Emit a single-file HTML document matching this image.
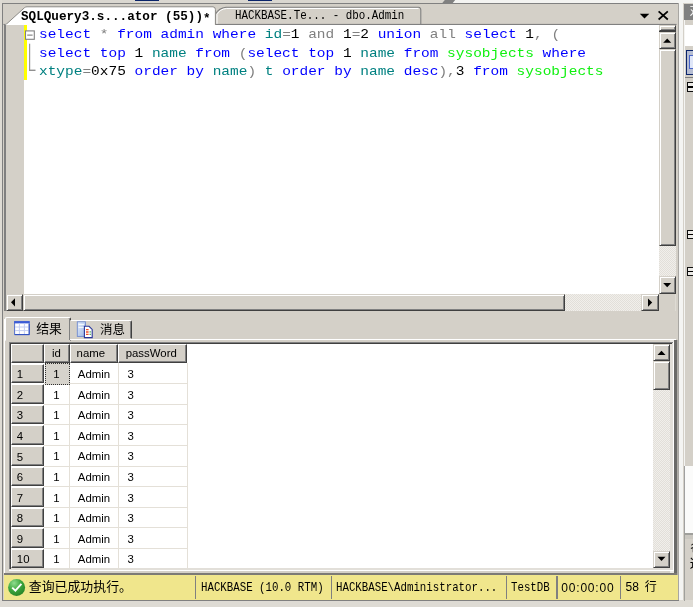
<!DOCTYPE html>
<html><head><meta charset="utf-8">
<style>
html,body{margin:0;padding:0;}
body{width:693px;height:607px;overflow:hidden;background:#d4d0c8;position:relative;font-family:"Liberation Sans","Noto Sans CJK SC",sans-serif;}
.a{position:absolute;}
.btn{position:absolute;background:#d4d0c8;box-sizing:border-box;border:1px solid;border-color:#d4d0c8 #404040 #404040 #d4d0c8;box-shadow:inset 1px 1px 0 #fff, inset -1px -1px 0 #808080;}
.track{position:absolute;background:#e9e7e2 repeating-conic-gradient(#f1efeb 0% 25%,#e2dfd9 0% 50%) 0 0/2px 2px;}
.code{position:absolute;left:39.3px;font-family:"Liberation Mono",monospace;font-size:12.6px;transform-origin:0 0;transform:scaleX(1.1487);white-space:pre;line-height:18.43px;height:18.43px;color:#000;}
.k{color:#0000ff}.g{color:#808080}.t{color:#008080}.s{color:#10f010}
.sim{font-family:"Liberation Mono","Noto Sans CJK SC",monospace;font-size:13px;white-space:pre;color:#000;transform-origin:0 0;transform:scaleX(0.827);}
.tah{font-family:"Liberation Sans","Noto Sans CJK SC",sans-serif;font-size:11.4px;white-space:pre;color:#000;}
.rh{position:absolute;left:10.5px;width:33px;height:19.6px;background:#d4d0c8;box-sizing:border-box;border:1px solid;border-color:#fff #404040 #404040 #fff;box-shadow:inset -1px -1px 0 #808080;}
.rh span,.cell{position:absolute;font-family:"Liberation Sans",sans-serif;font-size:11.4px;line-height:20px;color:#000;white-space:pre;}
.hl{position:absolute;background:#e4e0d8;}
#root{position:absolute;left:0;top:0;width:693px;height:607px;overflow:hidden;background:#d4d0c8;filter:blur(0.3px);}
</style></head><body><div id="root">

<!-- top strip -->
<div class="a" style="left:0;top:0;width:693px;height:3.3px;background:#dad7d0"></div>
<div class="a" style="left:0;top:0;width:2.2px;height:607px;background:#dedbd4"></div>
<div class="a" style="left:452.5px;top:0;width:241px;height:3.3px;background:#f4f4f2"></div>
<svg class="a" style="left:440px;top:0" width="20" height="4"><polygon points="1.9,3.4 4.8,0 15.2,0 12.3,3.4" fill="#808080"/></svg>
<div class="a" style="left:134.5px;top:0;width:24.5px;height:1.4px;background:#0a246a"></div>
<div class="a" style="left:247.5px;top:0;width:24.5px;height:1.4px;background:#0a246a"></div>

<!-- main panel frame -->
<div class="a" style="left:2.3px;top:3.2px;width:676.5px;height:1.2px;background:#808080"></div>
<div class="a" style="left:2.3px;top:3.2px;width:1.2px;height:597px;background:#808080"></div>
<div class="a" style="left:677.6px;top:3.2px;width:1.3px;height:598px;background:#a8a6a2"></div>
<!-- gap right of main panel -->
<div class="a" style="left:678.8px;top:3.2px;width:4.5px;height:597px;background:#f4f4f2"></div>

<!-- tab strip -->
<svg class="a" style="left:0;top:0" width="693" height="30">
  <!-- inactive tab -->
  <path d="M215.5,24.5 L215.5,14 Q219,8 226,7.3 L418.5,7.3 Q420.8,7.5 420.8,10 L420.8,24.5" fill="#d4d0c8" stroke="#808080" stroke-width="1.1"/>
  <path d="M217,24 L217,14.5 Q220,9 226.5,8.5 L418.5,8.5" fill="none" stroke="#fff" stroke-width="1"/>
  <!-- bottom line of strip -->
  <rect x="3.5" y="23.9" width="673" height="1.1" fill="#808080"/>
  <!-- active tab -->
  <path d="M4.6,25.5 L6.2,24.3 L24.6,7.6 Q25.6,6.8 27,6.8 L213,6.8 Q215.4,7 215.4,9.5 L215.4,25.5 Z" fill="#fff" stroke="#8c8a86" stroke-width="1"/>
  <rect x="5.6" y="24.6" width="209.3" height="1.5" fill="#fff"/>
  <!-- dropdown + close -->
  <polygon points="639.8,13.8 649.3,13.8 644.5,18.6" fill="#000"/>
  <path d="M658.6,11.3 L667.8,19.5 M667.8,11.3 L658.6,19.5" stroke="#000" stroke-width="1.7" fill="none"/>
</svg>
<div class="a sim" style="left:21.3px;top:9.6px;font-weight:bold;font-size:13px;transform:scaleX(0.972);line-height:14px">SQLQuery3.s...ator (55))<span style="position:relative;top:2.6px">*</span></div>
<div class="a sim" style="left:235px;top:9.4px;line-height:14px;transform:scaleX(0.835)">HACKBASE.Te... - dbo.Admin</div>

<!-- editor -->
<div class="a" style="left:4.4px;top:25px;width:1.2px;height:286px;background:#808080"></div>
<div class="a" style="left:5.5px;top:25px;width:653.1px;height:268.9px;background:#fff"></div>
<div class="a" style="left:5.5px;top:25px;width:18.5px;height:268.9px;background:#d4d0c8"></div>
<div class="a" style="left:24px;top:25px;width:3.2px;height:54.9px;background:#ffff00"></div>
<!-- outline -->
<svg class="a" style="left:24px;top:25px" width="16" height="60">
  <rect x="1.5" y="5.9" width="8.8" height="8.4" fill="#fff" stroke="#808080" stroke-width="1.1"/>
  <rect x="3.2" y="9.6" width="5.4" height="1" fill="#707070"/>
  <rect x="5.1" y="18.7" width="1.1" height="27.3" fill="#909090"/>
  <rect x="5.1" y="44.6" width="6.4" height="1.4" fill="#909090"/>
</svg>
<div class="code" style="top:26.3px"><span class="k">select</span> <span class="g">*</span> <span class="k">from admin where</span> <span class="t">id</span><span class="g">=</span>1 <span class="g">and</span> 1<span class="g">=</span>2 <span class="k">union</span> <span class="g">all</span> <span class="k">select</span> 1<span class="g">,</span> <span class="g">(</span></div>
<div class="code" style="top:44.73px"><span class="k">select top</span> 1 <span class="t">name</span> <span class="k">from</span> <span class="g">(</span><span class="k">select top</span> 1 <span class="t">name</span> <span class="k">from</span> <span class="s">sysobjects</span> <span class="k">where</span></div>
<div class="code" style="top:63.16px"><span class="t">xtype</span><span class="g">=</span>0x75 <span class="k">order by</span> <span class="t">name</span><span class="g">)</span> <span class="t">t</span> <span class="k">order by</span> <span class="t">name</span> <span class="k">desc</span><span class="g">),</span>3 <span class="k">from</span> <span class="s">sysobjects</span></div>

<!-- editor v scrollbar -->
<div class="track" style="left:658.6px;top:25px;width:17.3px;height:269px"></div>
<div class="btn" style="left:658.6px;top:25px;width:17.3px;height:6px"></div>
<div class="a" style="left:658.6px;top:31px;width:17.3px;height:1.3px;background:#404040"></div>
<div class="btn" style="left:658.6px;top:32.2px;width:17.3px;height:16.4px"></div>
<div class="btn" style="left:658.6px;top:48.6px;width:17.3px;height:197.4px"></div>
<div class="btn" style="left:658.6px;top:276.3px;width:17.3px;height:17.4px"></div>
<!-- editor h scrollbar -->
<div class="track" style="left:5.5px;top:293.9px;width:653.1px;height:17.3px"></div>
<div class="btn" style="left:5.5px;top:293.9px;width:17.3px;height:17.3px"></div>
<div class="btn" style="left:22.8px;top:293.9px;width:541.8px;height:17.3px"></div>
<div class="btn" style="left:641.3px;top:293.9px;width:17.3px;height:17.3px"></div>
<div class="a" style="left:658.6px;top:293.9px;width:17.9px;height:17.3px;background:#d4d0c8;box-shadow:inset -1px 0 0 #dedbd4"></div>

<!-- results tabs -->
<div class="a" style="left:5px;top:317px;width:65.8px;height:23.5px;box-sizing:border-box;border:1px solid;border-color:#fff #404040 #d4d0c8 #fff;border-radius:2px 2px 0 0;box-shadow:inset -1px 0 0 #808080"></div>
<div class="a" style="left:70px;top:319.5px;width:62px;height:19.5px;box-sizing:border-box;border:1px solid;border-color:#fff #404040 #d4d0c8 #d4d0c8;border-radius:0 2px 0 0;box-shadow:inset -1px 0 0 #808080"></div>
<!-- icons -->
<svg class="a" style="left:13.5px;top:321px" width="17" height="15">
  <rect x="0.6" y="0.6" width="14.6" height="13" fill="#fff" stroke="#5570cc" stroke-width="1"/>
  <rect x="0.2" y="0.2" width="15.4" height="2.2" fill="#3c5cd6"/>
  <path d="M1,6 H15 M1,9.6 H15 M5.4,2.4 V13.4 M10.4,2.4 V13.4" stroke="#c4cef2" stroke-width="1"/>
  <path d="M15.2,3 V13.6 H1" stroke="#3050c0" stroke-width="1" fill="none"/>
</svg>
<svg class="a" style="left:76px;top:320px" width="18" height="19">
  <defs><linearGradient id="pg" x1="0" y1="0" x2="1" y2="1"><stop offset="0" stop-color="#e4eefc"/><stop offset="1" stop-color="#9db6e4"/></linearGradient></defs>
  <rect x="1.3" y="1.8" width="8.2" height="14.6" fill="url(#pg)" stroke="#6f8ad0" stroke-width="0.9"/>
  <path d="M2.5,4.5 H8 M2.5,7.5 H8" stroke="#fff" stroke-width="1" opacity="0.8"/>
  <path d="M8.4,6.3 L13,6.3 L16.2,9.4 L16.2,17.6 L8.4,17.6 Z" fill="#fff" stroke="#28369a" stroke-width="1.1"/>
  <path d="M10,9.6 H12.6 M10,12 H12.6 M10,14.4 H12.6" stroke="#f0502a" stroke-width="1.4"/>
  <path d="M13.6,11.8 H14.8 M13.6,14.4 H14.8" stroke="#30a040" stroke-width="1.3"/>
</svg>
<div class="a" style="left:36.3px;top:320.5px;font-size:12.8px;line-height:16px;font-family:'Liberation Sans','Noto Sans CJK SC',sans-serif">结果</div>
<div class="a" style="left:100px;top:322.3px;font-size:12.5px;line-height:16px;font-family:'Liberation Sans','Noto Sans CJK SC',sans-serif">消息</div>

<!-- results pane -->
<!-- tab page raised border -->
<div class="a" style="left:70px;top:339.3px;width:606px;height:1.1px;background:#fff"></div>
<div class="a" style="left:4px;top:318.5px;width:1.1px;height:255px;background:#fff"></div>
<div class="a" style="left:670.2px;top:340px;width:4.4px;height:233px;background:#eceae6"></div>
<div class="a" style="left:674.4px;top:340px;width:2.3px;height:235px;background:#6a6a68"></div>
<div class="a" style="left:676.7px;top:340px;width:1px;height:235px;background:#b0aea8"></div>
<div class="a" style="left:4px;top:572.7px;width:673px;height:2.6px;background:#7c7a76"></div>
<!-- grid sunken border -->
<div class="a" style="left:8.6px;top:341.9px;width:665.8px;height:229.6px;background:#fff"></div>
<div class="a" style="left:8.6px;top:341.9px;width:664.6px;height:228.4px;background:#e2dfd9"></div>
<div class="a" style="left:10.7px;top:344px;width:659.5px;height:224px;background:#fff"></div>
<div class="a" style="left:8.6px;top:341.9px;width:664px;height:1.1px;background:#808080"></div>
<div class="a" style="left:8.6px;top:341.9px;width:1.1px;height:227px;background:#808080"></div>
<div class="a" style="left:9.7px;top:343px;width:662px;height:1.1px;background:#404040"></div>
<div class="a" style="left:9.7px;top:343px;width:1.1px;height:225.5px;background:#404040"></div>
<!-- results v scrollbar -->
<div class="track" style="left:653.2px;top:344px;width:17px;height:224px"></div>
<div class="btn" style="left:653.2px;top:344px;width:17px;height:16.5px"></div>
<div class="btn" style="left:653.2px;top:360.5px;width:17px;height:29.5px"></div>
<div class="btn" style="left:653.2px;top:551px;width:17px;height:17px"></div>
<!-- grid header -->
<div class="rh" style="top:344.00px;left:10.70px;width:33.70px;height:19.20px"></div>
<div class="rh" style="top:344.00px;left:44.40px;width:25.20px;height:19.20px"><span style="left:6.7px;top:-2px">id</span></div>
<div class="rh" style="top:344.00px;left:69.60px;width:48.50px;height:19.20px"><span style="left:6.0px;top:-2px">name</span></div>
<div class="rh" style="top:344.00px;left:118.10px;width:69.20px;height:19.20px"><span style="left:6.6px;top:-2px">passWord</span></div>
<div class="rh" style="top:363.70px"><span style="left:5.3px;top:-0.4px">1</span></div>
<div class="cell" style="left:53.3px;top:364.20px">1</div>
<div class="cell" style="left:77.8px;top:364.20px">Admin</div>
<div class="cell" style="left:127.5px;top:364.20px">3</div>
<div class="hl" style="left:44.4px;top:383.26px;width:143.2px;height:1.1px"></div>
<div class="rh" style="top:384.26px"><span style="left:5.3px;top:-0.4px">2</span></div>
<div class="cell" style="left:53.3px;top:384.76px">1</div>
<div class="cell" style="left:77.8px;top:384.76px">Admin</div>
<div class="cell" style="left:127.5px;top:384.76px">3</div>
<div class="hl" style="left:44.4px;top:403.82px;width:143.2px;height:1.1px"></div>
<div class="rh" style="top:404.82px"><span style="left:5.3px;top:-0.4px">3</span></div>
<div class="cell" style="left:53.3px;top:405.32px">1</div>
<div class="cell" style="left:77.8px;top:405.32px">Admin</div>
<div class="cell" style="left:127.5px;top:405.32px">3</div>
<div class="hl" style="left:44.4px;top:424.38px;width:143.2px;height:1.1px"></div>
<div class="rh" style="top:425.38px"><span style="left:5.3px;top:-0.4px">4</span></div>
<div class="cell" style="left:53.3px;top:425.88px">1</div>
<div class="cell" style="left:77.8px;top:425.88px">Admin</div>
<div class="cell" style="left:127.5px;top:425.88px">3</div>
<div class="hl" style="left:44.4px;top:444.94px;width:143.2px;height:1.1px"></div>
<div class="rh" style="top:445.94px"><span style="left:5.3px;top:-0.4px">5</span></div>
<div class="cell" style="left:53.3px;top:446.44px">1</div>
<div class="cell" style="left:77.8px;top:446.44px">Admin</div>
<div class="cell" style="left:127.5px;top:446.44px">3</div>
<div class="hl" style="left:44.4px;top:465.50px;width:143.2px;height:1.1px"></div>
<div class="rh" style="top:466.50px"><span style="left:5.3px;top:-0.4px">6</span></div>
<div class="cell" style="left:53.3px;top:467.00px">1</div>
<div class="cell" style="left:77.8px;top:467.00px">Admin</div>
<div class="cell" style="left:127.5px;top:467.00px">3</div>
<div class="hl" style="left:44.4px;top:486.06px;width:143.2px;height:1.1px"></div>
<div class="rh" style="top:487.06px"><span style="left:5.3px;top:-0.4px">7</span></div>
<div class="cell" style="left:53.3px;top:487.56px">1</div>
<div class="cell" style="left:77.8px;top:487.56px">Admin</div>
<div class="cell" style="left:127.5px;top:487.56px">3</div>
<div class="hl" style="left:44.4px;top:506.62px;width:143.2px;height:1.1px"></div>
<div class="rh" style="top:507.62px"><span style="left:5.3px;top:-0.4px">8</span></div>
<div class="cell" style="left:53.3px;top:508.12px">1</div>
<div class="cell" style="left:77.8px;top:508.12px">Admin</div>
<div class="cell" style="left:127.5px;top:508.12px">3</div>
<div class="hl" style="left:44.4px;top:527.18px;width:143.2px;height:1.1px"></div>
<div class="rh" style="top:528.18px"><span style="left:5.3px;top:-0.4px">9</span></div>
<div class="cell" style="left:53.3px;top:528.68px">1</div>
<div class="cell" style="left:77.8px;top:528.68px">Admin</div>
<div class="cell" style="left:127.5px;top:528.68px">3</div>
<div class="hl" style="left:44.4px;top:547.74px;width:143.2px;height:1.1px"></div>
<div class="rh" style="top:548.74px"><span style="left:5.3px;top:-0.4px">10</span></div>
<div class="cell" style="left:53.3px;top:549.24px">1</div>
<div class="cell" style="left:77.8px;top:549.24px">Admin</div>
<div class="cell" style="left:127.5px;top:549.24px">3</div>
<div class="hl" style="left:69.0px;top:363.3px;width:1.1px;height:204.7px"></div>
<div class="hl" style="left:117.5px;top:363.3px;width:1.1px;height:204.7px"></div>
<div class="hl" style="left:186.6px;top:363.3px;width:1.1px;height:204.7px"></div>
<div class="a" style="left:45.3px;top:362.6px;width:25.2px;height:22px;background:#d6d3cc;box-sizing:border-box;border:1.1px dotted #303030"></div>
<div class="cell" style="left:53.3px;top:364.20px">1</div>
<!-- status bar -->
<div class="a" style="left:4px;top:575.2px;width:674px;height:24.8px;background:#f0e68c"></div>
<svg class="a" style="left:6.9px;top:577px" width="20" height="21">
  <defs><radialGradient id="gg" cx="0.35" cy="0.25" r="0.9"><stop offset="0" stop-color="#8fdc8f"/><stop offset="0.45" stop-color="#3fa83f"/><stop offset="1" stop-color="#207a20"/></radialGradient></defs>
  <circle cx="9.6" cy="10.4" r="8.5" fill="url(#gg)"/>
  <path d="M5.2,10.6 L8.4,13.6 L14.4,6.8" fill="none" stroke="#fff" stroke-width="1.9"/>
</svg>
<div class="a" style="left:28.8px;top:578px;font-size:12.9px;line-height:17px;font-family:'Liberation Sans','Noto Sans CJK SC',sans-serif;white-space:pre">查询已成功执行。</div>
<div class="a" style="left:195.3px;top:576.2px;width:1.2px;height:22.6px;background:#808080"></div>
<div class="a" style="left:330.8px;top:576.2px;width:1.2px;height:22.6px;background:#808080"></div>
<div class="a" style="left:505.8px;top:576.2px;width:1.2px;height:22.6px;background:#808080"></div>
<div class="a" style="left:556.4px;top:576.2px;width:1.2px;height:22.6px;background:#808080"></div>
<div class="a" style="left:620.2px;top:576.2px;width:1.2px;height:22.6px;background:#808080"></div>
<div class="a sim" style="left:200.5px;top:580.3px;line-height:15px">HACKBASE (10.0 RTM)</div>
<div class="a sim" style="left:335.6px;top:580.3px;line-height:15px">HACKBASE\Administrator...</div>
<div class="a sim" style="left:510.6px;top:580.3px;line-height:15px">TestDB</div>
<div class="a tah" style="left:561.3px;top:579.7px;line-height:16px;font-size:12px;letter-spacing:0.8px">00:00:00</div>
<div class="a tah" style="left:625.5px;top:579.2px;line-height:16px;font-size:12px;word-spacing:2.6px">58 行</div>

<!-- bottom strip -->
<div class="a" style="left:0;top:600px;width:693px;height:7px;background:#dedbd4"></div>
<div class="a" style="left:2.3px;top:600px;width:676.5px;height:1.3px;background:#808080"></div>

<!-- right panel -->
<div class="a" style="left:683.3px;top:3.4px;width:10px;height:597px;background:#d4d0c8"></div>
<div class="a" style="left:683.6px;top:3.6px;width:10px;height:16px;background:#808080"></div>
<div class="a" style="left:684.8px;top:24.7px;width:9px;height:21.5px;background:#fff"></div>
<div class="a" style="left:683.6px;top:20px;width:1.1px;height:580px;background:#f4f4f2"></div>
<div class="a" style="left:686px;top:50.4px;width:8px;height:24.6px;background:#b6bdd2;box-sizing:border-box;border:1.2px solid #0a246a"></div>
<div class="a" style="left:684.5px;top:77px;width:9px;height:1.2px;background:#808080"></div>
<div class="a" style="left:686.8px;top:82.3px;width:8px;height:9.5px;box-sizing:border-box;border:1.2px solid #101010;background:#eceae6"></div>
<div class="a" style="left:686.8px;top:229.8px;width:8px;height:9.6px;box-sizing:border-box;border:1.2px solid #101010;background:#eceae6"></div>
<div class="a" style="left:686.8px;top:266.6px;width:8px;height:9.6px;box-sizing:border-box;border:1.2px solid #101010;background:#eceae6"></div>
<svg class="a" style="left:0;top:0" width="693" height="607">
  <polygon points="663.2,42.8 671.2,42.8 667.2,38.6" fill="#000"/>
  <polygon points="663.2,283 671.2,283 667.2,287.2" fill="#000"/>
  <polygon points="15,298.2 15,306.4 11,302.3" fill="#000"/>
  <polygon points="648,298.5 648,306.7 652.2,302.6" fill="#000"/>
  <polygon points="657.5,355 665.5,355 661.5,350.8" fill="#000"/>
  <polygon points="657.5,556.8 665.5,556.8 661.5,561" fill="#000"/>
</svg>
<div class="a" style="left:684.6px;top:465.5px;width:9px;height:67.5px;background:#fbfbfa"></div>
<div class="a" style="left:683.6px;top:465.5px;width:1.1px;height:67.5px;background:#a0a0a0"></div>
<div class="a" style="left:683.6px;top:533px;width:10px;height:1.7px;background:#a0a09c"></div>
<div class="a" style="left:683.6px;top:534.7px;width:10px;height:4px;background:#cac7c0"></div>
<div class="a" style="left:683.6px;top:533px;width:1.3px;height:68px;background:#a0a09c"></div>
<div class="a" style="left:690.2px;top:541.5px;font-size:10px;line-height:11px;font-family:'Liberation Sans','Noto Sans CJK SC',sans-serif">名</div>
<div class="a" style="left:689.8px;top:557px;font-size:12.5px;line-height:14px;font-family:'Liberation Sans','Noto Sans CJK SC',sans-serif">这</div>
<div class="a" style="left:688.4px;top:86.4px;width:5px;height:1.2px;background:#000"></div>
<div class="a" style="left:688.4px;top:234px;width:5px;height:1.2px;background:#000"></div>
<div class="a" style="left:688.4px;top:271px;width:5px;height:1.2px;background:#000"></div>
<div class="a" style="left:689.5px;top:5px;font-size:12px;line-height:13px;color:#fff;font-family:'Liberation Sans','Noto Sans CJK SC',sans-serif">对</div>
<div class="a" style="left:688.5px;top:55px;width:5px;height:14px;box-sizing:border-box;border:1.2px solid #4a66c8;border-right:none;background:#dfe6f8"></div>
</div></body></html>
